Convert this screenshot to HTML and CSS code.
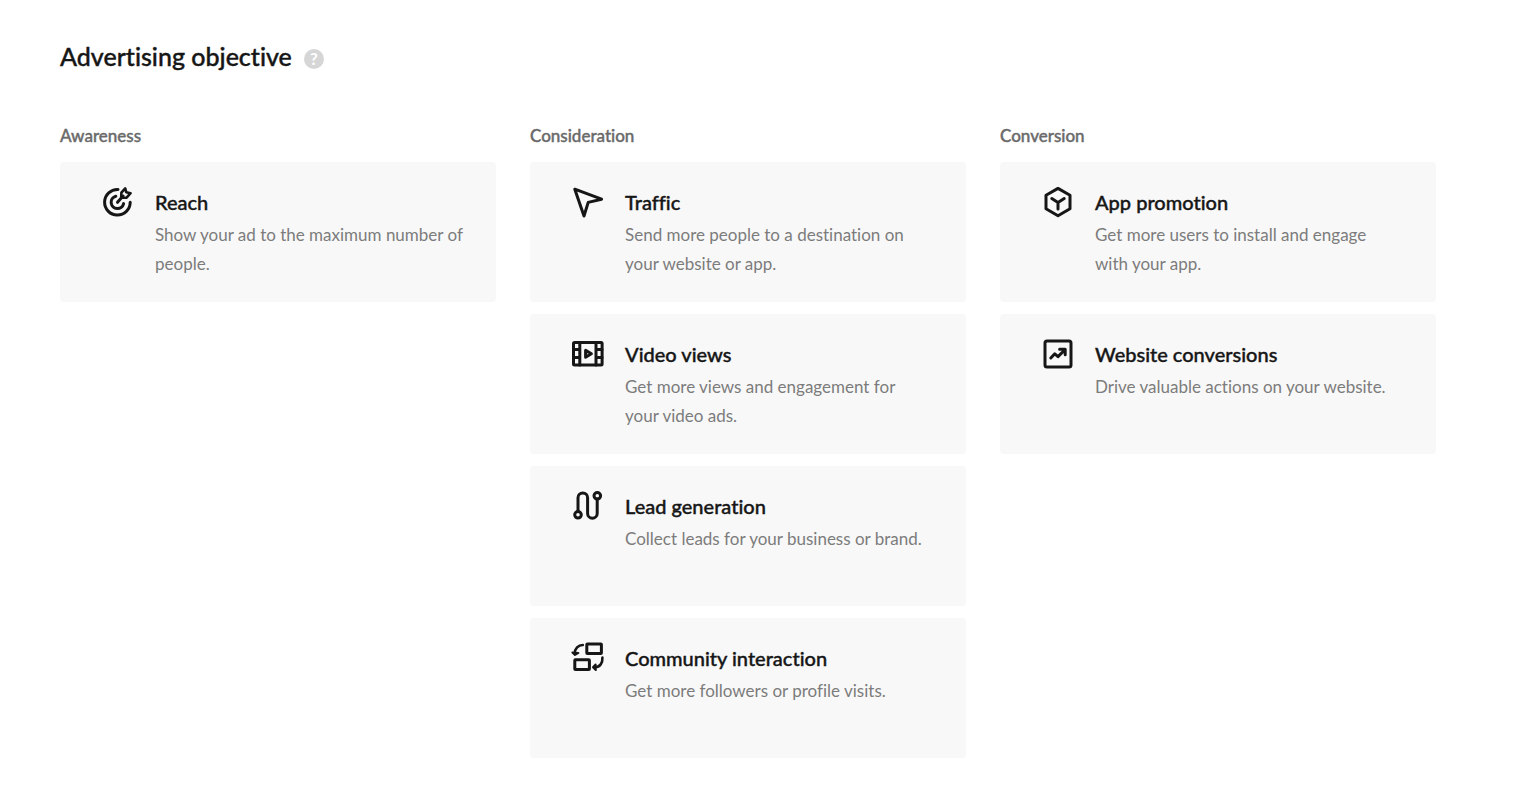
FILE: index.html
```html
<!DOCTYPE html>
<html lang="en">
<head>
    <meta charset="UTF-8">
    <meta name="viewport" content="width=device-width, initial-scale=1.0">
    <title>Advertising objective</title>
    <link rel="stylesheet" href="styles.css">
</head>
<body>
    <main class="page">
        <div class="page-header">
            <h1>Advertising objective</h1>
            <button type="button" class="help" aria-label="Help">?</button>
        </div>

        <div class="objectives">
            <section class="column">
                <h2>Awareness</h2>
                <button type="button" class="card">
                    <svg class="icon" viewBox="0 0 32 32" aria-hidden="true">
                        <path d="M16 3.5A12.8 12.8 0 1 0 28.2 16.3"/>
                        <path d="M13.8 10.2A6.3 6.3 0 1 0 21.6 17.6"/>
                        <path d="M15.5 16.3L21 10"/>
                        <path class="feather" d="M19.2 11.8L19.4 6.6L23.2 2.4L24.2 6.2L28.6 7.2L24.6 11.6Z"/>
                    </svg>
                    <span class="card-text">
                        <span class="card-title">Reach</span>
                        <span class="card-desc">Show your ad to the maximum number of people.</span>
                    </span>
                </button>
            </section>

            <section class="column">
                <h2>Consideration</h2>
                <button type="button" class="card">
                    <svg class="icon" viewBox="0 0 32 32" aria-hidden="true">
                        <path d="M2.8 3.2L29.6 13.2L16.2 16.4L12 30Z"/>
                    </svg>
                    <span class="card-text">
                        <span class="card-title">Traffic</span>
                        <span class="card-desc">Send more people to a destination on your website or app.</span>
                    </span>
                </button>
                <button type="button" class="card">
                    <svg class="icon" viewBox="0 0 32 32" aria-hidden="true">
                        <rect x="1.5" y="4.5" width="28.6" height="22.4" rx="1"/>
                        <path d="M7.8 4.5V27M24 4.5V27M1.5 11.6H7.8M1.5 19.6H7.8M24 11.6H30M24 19.6H30"/>
                        <path d="M13.6 12.4V19.2L19.4 15.8Z"/>
                    </svg>
                    <span class="card-text">
                        <span class="card-title">Video views</span>
                        <span class="card-desc">Get more views and engagement for your&nbsp;video ads.</span>
                    </span>
                </button>
                <button type="button" class="card">
                    <svg class="icon" viewBox="0 0 32 32" aria-hidden="true">
                        <circle cx="6" cy="24.8" r="3.3"/>
                        <circle cx="25.3" cy="5.8" r="3.3"/>
                        <path d="M6 21.5V7.8A4.8 4.8 0 0 1 15.6 7.8V23.4A4.8 4.8 0 0 0 25.2 23.4V9.1"/>
                    </svg>
                    <span class="card-text">
                        <span class="card-title">Lead generation</span>
                        <span class="card-desc">Collect leads for your business or brand.</span>
                    </span>
                </button>
                <button type="button" class="card">
                    <svg class="icon" viewBox="0 0 32 32" aria-hidden="true">
                        <rect x="14.8" y="2" width="14.6" height="9.6" rx="0.6"/>
                        <rect x="2.8" y="17.8" width="14.6" height="9.8" rx="0.6"/>
                        <path class="arrow" d="M10.8 3C6.2 3 2.8 6.6 2.8 11.4"/>
                        <path class="arrow solid" d="M0.4 10.6L3 13L6.4 11Z"/>
                        <path class="arrow" d="M30.4 15.6C30.8 21 28 25 23 25.2"/>
                        <path class="arrow solid" d="M23.6 22.4L21 25.2L23.8 28Z"/>
                    </svg>
                    <span class="card-text">
                        <span class="card-title">Community interaction</span>
                        <span class="card-desc">Get more followers or profile visits.</span>
                    </span>
                </button>
            </section>

            <section class="column">
                <h2>Conversion</h2>
                <button type="button" class="card">
                    <svg class="icon" viewBox="0 0 32 32" aria-hidden="true">
                        <path d="M16 2.4L28 9.2V22.8L16 29.8L4 22.8V9.2Z"/>
                        <path d="M9.8 12.6L16 16.6L22.2 12.6M16 16.6V23"/>
                    </svg>
                    <span class="card-text">
                        <span class="card-title">App promotion</span>
                        <span class="card-desc">Get more users to install and engage with&nbsp;your app.</span>
                    </span>
                </button>
                <button type="button" class="card">
                    <svg class="icon" viewBox="0 0 32 32" aria-hidden="true">
                        <rect x="3" y="3" width="26" height="26" rx="2"/>
                        <path d="M8.8 20L12.8 15.8L16 18.6L22.4 12.2M17.6 11.2H23.2V16.8"/>
                    </svg>
                    <span class="card-text">
                        <span class="card-title">Website conversions</span>
                        <span class="card-desc">Drive valuable actions on your website.</span>
                    </span>
                </button>
            </section>
        </div>
    </main>
</body>
</html>
```
FILE: styles.css
```css
:root {
    --color-text: #161616;
    --color-label: #6a6a6a;
    --color-desc: #7c7c7c;
    --color-card: #f8f8f8;
}

* {
    box-sizing: border-box;
}

body {
    font-family: Lato, "Liberation Sans", sans-serif;
    font-variant-ligatures: none;
    margin: 0;
    background-color: #fff;
    color: var(--color-text);
}

.page {
    padding: 40px 100px 40px 60px;
}

.page-header {
    display: flex;
    align-items: center;
    gap: 12px;
    margin-bottom: 52px;
}

h1 {
    margin: 0;
    font-size: 25px;
    font-weight: 500;
    line-height: 32px;
    -webkit-text-stroke: 0.4px currentColor;
}

.help {
    width: 20px;
    height: 20px;
    margin-top: 6px;
    padding: 0;
    border: none;
    border-radius: 50%;
    background-color: #d6d6d6;
    color: #fff;
    font-family: inherit;
    font-size: 17px;
    font-weight: 700;
    line-height: 20px;
    cursor: pointer;
}

.objectives {
    display: grid;
    grid-template-columns: repeat(3, 1fr);
    gap: 34px;
    align-items: start;
}

.column {
    display: flex;
    flex-direction: column;
    gap: 12px;
}

h2 {
    margin: 0 0 2px;
    color: var(--color-label);
    font-size: 17px;
    font-weight: 500;
    line-height: 24px;
    -webkit-text-stroke: 0.4px currentColor;
}

.card {
    display: flex;
    align-items: flex-start;
    gap: 21px;
    min-height: 140px;
    padding: 24px 30px 22px 42px;
    border: none;
    border-radius: 4px;
    background-color: var(--color-card);
    color: inherit;
    font-family: inherit;
    font-variant-ligatures: inherit;
    text-align: left;
    cursor: pointer;
}

.card:hover {
    background-color: #f1f1f1;
}

.icon {
    flex: none;
    width: 32px;
    height: 32px;
    overflow: visible;
    fill: none;
    stroke: currentColor;
    stroke-width: 3;
    stroke-linejoin: round;
    stroke-linecap: round;
}

.feather {
    stroke-width: 2.6;
}

.arrow {
    stroke-width: 2.6;
}

.solid {
    fill: currentColor;
    stroke-width: 2;
}

.card-title,
.card-desc {
    display: block;
}

.card-title {
    margin-bottom: 2px;
    font-size: 20px;
    font-weight: 500;
    line-height: 32px;
    -webkit-text-stroke: 0.4px currentColor;
}

.card-desc {
    color: var(--color-desc);
    font-size: 17px;
    line-height: 29px;
}
```
